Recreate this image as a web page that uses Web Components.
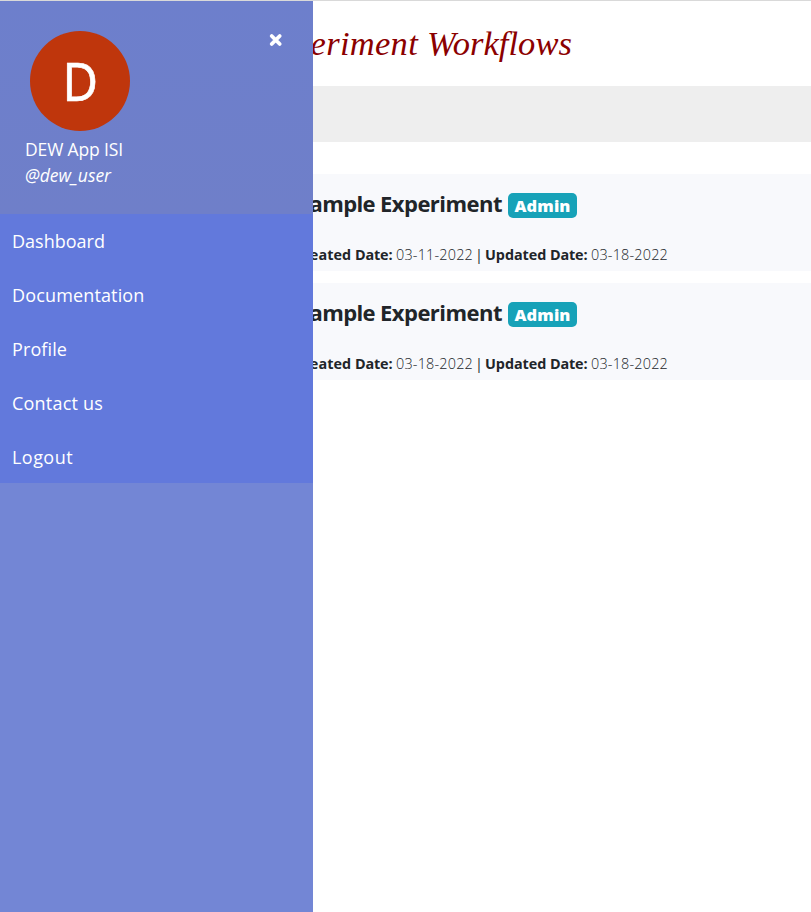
<!DOCTYPE html>
<html lang="en"><head><meta charset="utf-8"><title>Experiment Workflows</title>
<style>body{margin:0;background:#fff;font-family:"Open Sans","Noto Sans",sans-serif;color:#212529}</style></head>
<body><dew-app></dew-app>
<script>
const define=(name,html,setup)=>customElements.define(name,class extends HTMLElement{
  connectedCallback(){
    if(this.shadowRoot)return;
    const t=document.createElement('template');t.innerHTML=html;
    this.attachShadow({mode:'open'}).append(t.content.cloneNode(true));
    if(setup)setup(this);
  }
});
// Inline text run whose tracking is adjusted to occupy the width given in "w".
define('fit-text','<style>:host{display:inline-block;white-space:pre}</style><slot></slot>',el=>{
  const w=+el.getAttribute('w'),n=el.textContent.length;
  const range=document.createRange();range.selectNodeContents(el);
  el.style.letterSpacing=(w-range.getBoundingClientRect().width)/n+'px';
});
define('user-card',`<style>
:host{display:flex;justify-content:space-between;height:213px;box-sizing:border-box;padding:30px 30px 0 25px;background:linear-gradient(#6d7fcc,#6f7fc9);color:#fff;font-size:17.5px;line-height:26px}
.avatar{width:100px;height:100px;margin:0 0 5px 5px;border-radius:50%;background:#bf360c;display:flex;align-items:center;justify-content:center;font:53px/98px "Noto Sans",sans-serif}
.avatar span{-webkit-text-stroke:.6px #fff;transform:scaleX(.92)}
.handle{font-style:italic}
svg{margin-top:2px;width:14px;height:14px}
</style><div><div class="avatar"><span>D</span></div><div><fit-text w="98">DEW App ISI</fit-text></div><div class="handle"><fit-text w="86">@dew_user</fit-text></div></div>
<svg viewBox="0 0 14 14"><path d="M2.7 3 10.7 11M10.7 3 2.7 11" stroke="#fff" stroke-width="3.8" stroke-linecap="round"/></svg>`);
define('menu-item',`<style>:host{display:block;height:54px;box-sizing:border-box;padding-left:12px;background:#6279dc;color:#fff;font-size:18px;line-height:54px}</style><slot></slot>`);
define('side-bar',`<style>:host{position:absolute;left:0;top:0;width:313px;height:911px;background:#7386d5;overflow:hidden}nav{height:269px;overflow:hidden}</style>
<user-card></user-card><nav><menu-item><fit-text w="93">Dashboard</fit-text></menu-item><menu-item><fit-text w="132.5">Documentation</fit-text></menu-item><menu-item><fit-text w="55">Profile</fit-text></menu-item><menu-item><fit-text w="91">Contact us</fit-text></menu-item><menu-item><fit-text w="61">Logout</fit-text></menu-item></nav>`);
define('role-badge',`<style>:host{display:inline-block;box-sizing:border-box;width:69px;height:25px;border-radius:5px;background:#17a2b8;color:#fff;font-size:16.5px;font-weight:800;line-height:25px;text-align:center}</style><slot></slot>`);
define('experiment-row',`<style>
:host{display:block;height:97px;background:#f8f9fc}
.head{display:flex;width:577px;justify-content:flex-end;padding-top:12px;font-size:22px;font-weight:700;line-height:34px;height:36px}
role-badge{margin:7px 0 0 6px}
.meta{display:flex;width:668px;justify-content:flex-end;font-size:14.4px;line-height:22px;margin-top:22px}
.meta b{font-weight:700}.d{font-weight:300}
.bar{width:12px;text-align:center}
</style><div class="head"><fit-text w="82">Sample </fit-text><fit-text w="122">Experiment</fit-text><role-badge><fit-text w="56">Admin</fit-text></role-badge></div>
<div class="meta"><b><fit-text w="61">Created </fit-text><fit-text w="41">Date: </fit-text></b><span class="d" id="c"></span><span class="bar">|</span><b><fit-text w="65">Updated </fit-text><fit-text w="41">Date: </fit-text></b><span class="d" id="u"></span></div>`,el=>{
  for(const [id,a] of [['c','created'],['u','updated']])el.shadowRoot.getElementById(id).innerHTML='<fit-text w="77">'+el.getAttribute(a)+'</fit-text>';
});
define('page-title',`<style>:host{display:flex;justify-content:flex-end;box-sizing:border-box;width:572px;height:85px;color:#8b0000;font:italic 34.5px/84px "Liberation Serif",serif}</style><fit-text w="171">Experiment </fit-text><fit-text w="145">Workflows</fit-text>`);
define('dew-app',`<style>:host{display:block;position:relative;height:912px;box-sizing:border-box;border-top:1px solid #d9d9d9;overflow:hidden}
.bar{height:56px;background:#eee;margin-bottom:32px}.rows{display:grid;gap:12px}</style><page-title></page-title><div class="bar"></div><div class="rows"><experiment-row created="03-11-2022" updated="03-18-2022"></experiment-row><experiment-row created="03-18-2022" updated="03-18-2022"></experiment-row></div><side-bar></side-bar>`);
</script></body></html>
